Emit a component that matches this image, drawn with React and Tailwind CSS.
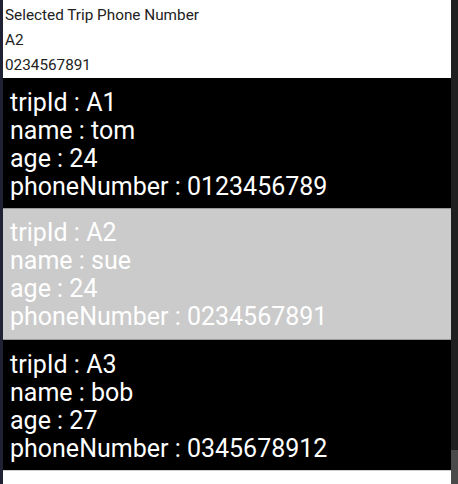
import React from "react";

const trips = [
  { tripId: "A1", name: "tom", age: 24, phoneNumber: "0123456789" },
  { tripId: "A2", name: "sue", age: 24, phoneNumber: "0234567891" },
  { tripId: "A3", name: "bob", age: 27, phoneNumber: "0345678912" },
];

export default function App() {
  const selected = "A2";
  return (
    <div className="flex h-[484px] w-[458px] overflow-hidden bg-white" style={{ fontFamily: "Roboto, 'Noto Sans', sans-serif" }}>
      <div className="w-[3px] shrink-0 bg-[#1f2235]" />
      <div className="flex flex-1 flex-col">
        <div className="pt-[3px] pl-[2px] text-[15.3px] leading-[25px] text-[#222]">
          <div>Selected Trip Phone Number</div>
          <div>A2</div>
          <div>0234567891</div>
        </div>
        {trips.map((t) => {
          const sel = t.tripId === selected;
          return (
            <div
              key={t.tripId}
              className={
                sel
                  ? "h-[132px] border-y border-[#9a9a9a] bg-[#cbcbcb] px-[7px] pt-[10px] text-[25px] leading-[28px] text-white"
                  : "h-[130px] bg-black px-[7px] pt-[11px] text-[25px] leading-[28px] text-white"
              }
            >
              <div>tripId : {t.tripId}</div>
              <div>name : {t.name}</div>
              <div>age : {t.age}</div>
              <div>phoneNumber : {t.phoneNumber}</div>
            </div>
          );
        })}
        <div className="flex-1 border-t border-[#cfcfcf] bg-white" />
      </div>
      <div className="flex w-[7px] shrink-0 flex-col bg-[#202020]">
        <div className="flex-1" />
        <div className="h-[34px] bg-[#4a4a4a]" />
      </div>
    </div>
  );
}
